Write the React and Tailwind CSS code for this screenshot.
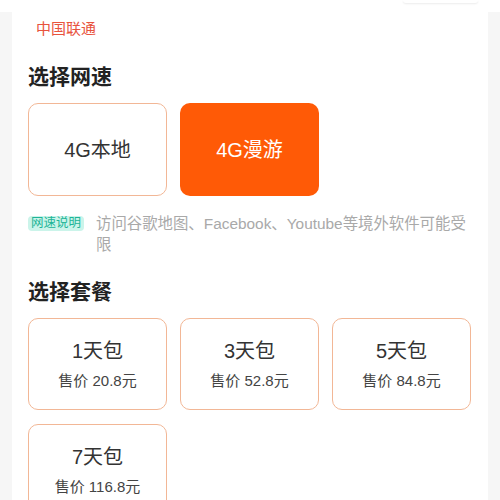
import React, { useState } from 'react';

const speeds = ['4G本地', '4G漫游'];
const packages = [
  { name: '1天包', price: '20.8' },
  { name: '3天包', price: '52.8' },
  { name: '5天包', price: '84.8' },
  { name: '7天包', price: '116.8' },
];

export default function App() {
  const [speed, setSpeed] = useState(1);
  const [pkg, setPkg] = useState(-1);

  return (
    <div className="w-[500px] h-[500px] overflow-hidden bg-white font-['Liberation_Sans','Noto_Sans_CJK_SC',sans-serif]">
      {/* 顶部 */}
      <div className="h-3 flex justify-end pr-[22px]">
        <div className="w-[75px] h-[3px] rounded-b-lg bg-white shadow-[0_1px_2px_rgba(0,0,0,0.08)]" />
      </div>

      <div className="flex bg-[#f6f6f6] min-h-[488px]">
        <div className="w-3 shrink-0" />
        <div className="flex-1 bg-white px-4 pt-[7px] pb-6">
          <div className="pl-2 text-[15px] leading-5 text-[#e8533d]">中国联通</div>

          <h2 className="mt-[24px] text-[21px] leading-7 font-semibold text-[#222]">选择网速</h2>
          <div className="mt-3 flex gap-[13px]">
            {speeds.map((s, i) => (
              <button
                key={s}
                onClick={() => setSpeed(i)}
                className={
                  'w-[139px] h-[93px] rounded-[10px] text-[20px] flex items-center justify-center ' +
                  (speed === i ? 'bg-[#ff5a06] text-white' : 'border border-[#f2b796] text-[#333] bg-white')
                }
              >
                {s}
              </button>
            ))}
          </div>

          {/* 网速说明 */}
          <div className="mt-[17px] flex items-start gap-[12px]">
            <span className="mt-[3px] shrink-0 rounded-[4px] bg-[#cbf4ea] px-[3px] text-[12.5px] leading-[15px] text-[#21b497]">网速说明</span>
            <p className="flex-1 text-[15.4px] leading-[21px] text-[#a9a9a9]">
              访问谷歌地图、Facebook、Youtube等境外软件可能受限
            </p>
          </div>

          <h2 className="mt-[23px] text-[21px] leading-7 font-semibold text-[#222]">选择套餐</h2>
          <div className="mt-3 grid grid-cols-3 gap-x-[13px] gap-y-[14px] w-[443px]">
            {packages.map((p, i) => (
              <button
                key={p.name}
                onClick={() => setPkg(i)}
                className={
                  'h-[92px] rounded-[10px] border flex flex-col items-center justify-center gap-[6px] ' +
                  (pkg === i ? 'border-[#ff5a06] bg-[#fff4ee]' : 'border-[#f2b796] bg-white')
                }
              >
                <span className="text-[20px] leading-7 text-[#333]">{p.name}</span>
                <span className="text-[15px] leading-5 text-[#444]">售价 {p.price}元</span>
              </button>
            ))}
          </div>
        </div>
        <div className="w-3 shrink-0" />
      </div>
    </div>
  );
}
